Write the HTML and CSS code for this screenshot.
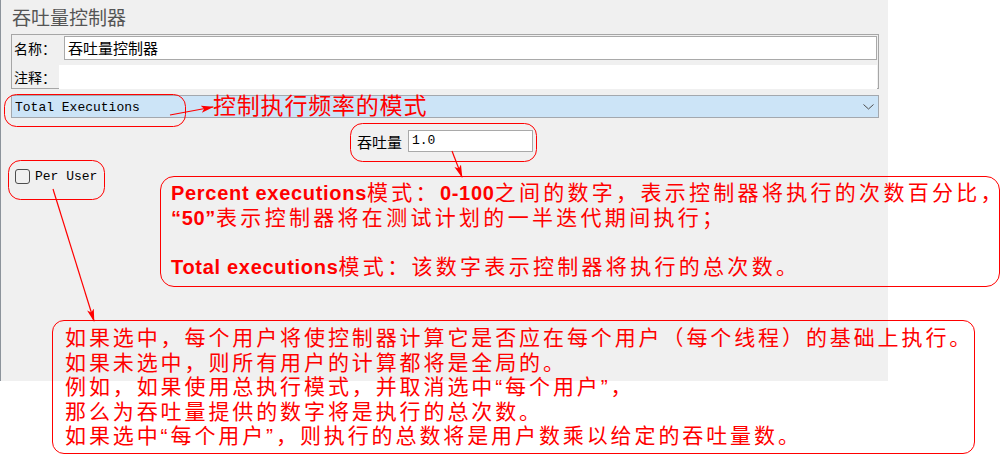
FILE: index.html
```html
<!DOCTYPE html>
<html>
<head>
	<meta charset="utf-8" />
	<title>吞吐量控制器</title>
	<link rel="stylesheet" href="styles.css">
</head>
<body>
	<div class="panel">
		<div class="title">吞吐量控制器</div>
		<div class="group">
			<div class="row name-row">
				<span class="label">名称：</span>
				<div class="field">吞吐量控制器</div>
			</div>
			<div class="row note-row">
				<span class="label">注释：</span>
				<div class="field plain"></div>
			</div>
		</div>
		<div class="combo">
			<span>Total Executions</span>
			<svg class="chevron" width="11" height="6" viewBox="0 0 11 6">
				<polyline points="0.5,0.5 5.5,5 10.5,0.5" fill="none" stroke="#4d4d4d" stroke-width="1"/>
			</svg>
		</div>
		<div class="tp-row">
			<span class="label">吞吐量</span>
			<div class="tp-field">1.0</div>
		</div>
		<div class="check-row">
			<span class="checkbox"></span>
			<span class="check-text">Per User</span>
		</div>
	</div>

	<!-- annotations -->
	<svg class="marks" width="1004" height="461">
		<defs>
			<marker id="head" markerWidth="13" markerHeight="8" refX="12" refY="4" orient="auto" markerUnits="userSpaceOnUse">
				<path d="M0,0.5 L13,4 L0,7.5 L3,4 z" fill="#ff0000"/>
			</marker>
		</defs>
		<rect x="4.5" y="94.5" width="181" height="32" rx="12" fill="none" stroke="#ff0000"/>
		<rect x="350.5" y="123.5" width="186" height="38" rx="12" fill="none" stroke="#ff0000"/>
		<rect x="8.5" y="160.5" width="96" height="39" rx="12" fill="none" stroke="#ff0000"/>
		<line x1="170" y1="115" x2="213" y2="107" stroke="#ff0000" stroke-width="1.2" marker-end="url(#head)"/>
		<line x1="452" y1="151" x2="462" y2="177" stroke="#ff0000" stroke-width="1.2" marker-end="url(#head)"/>
		<line x1="53" y1="189" x2="94" y2="321" stroke="#ff0000" stroke-width="1.2" marker-end="url(#head)"/>
	</svg>

	<div class="note-title">控制执行频率的模式</div>

	<div class="callout mode-note">
		<div><b>Percent executions</b>模式：<b>0-100</b>之间的数字，表示控制器将执行的次数百分比，</div>
		<div><b>“50”</b>表示控制器将在测试计划的一半迭代期间执行；</div>
		<div>&nbsp;</div>
		<div><b>Total executions</b>模式：该数字表示控制器将执行的总次数。</div>
	</div>

	<div class="callout user-note">
		<div>如果选中，每个用户将使控制器计算它是否应在每个用户（每个线程）的基础上执行。</div>
		<div>如果未选中，则所有用户的计算都将是全局的。</div>
		<div>例如，如果使用总执行模式，并取消选中“每个用户”，</div>
		<div>那么为吞吐量提供的数字将是执行的总次数。</div>
		<div>如果选中“每个用户”，则执行的总数将是用户数乘以给定的吞吐量数。</div>
	</div>
</body>
</html>
```

FILE: styles.css
```css
body{
	margin: 0;
	background-color: #ffffff;
	font-family: "Noto Sans CJK SC", sans-serif;
	position: relative;
	width: 1004px;
	height: 461px;
	overflow: hidden;
}

.panel{
	box-sizing: border-box;
	width: 888px;
	height: 381px;
	padding: 5px 9px 0 10px;
	background-color: #f0f0f0;
	border-left: 1px solid #8c939b;
	color: #000;
}
.title{
	font-size: 19px;
	line-height: 24px;
	color: #555555;
	padding-left: 1px;
}

.group{
	margin-top: 5px;
	border: 1px solid #a6a6a6;
	padding: 1px 1px 0 2px;
	height: 55px;
	box-sizing: border-box;
}
.row{
	display: flex;
	align-items: center;
}
.label{
	font-size: 14px;
	white-space: nowrap;
}
.name-row{
	height: 24px;
}
.name-row .label{
	width: 50px;
}
.note-row{
	margin-top: 5px;
	height: 24px;
}
.note-row .label{
	width: 45px;
}
.field{
	flex: 1;
	height: 24px;
	box-sizing: border-box;
	border: 1px solid #a9a9a9;
	background-color: #ffffff;
	font-size: 15px;
	line-height: 22px;
	padding-left: 3px;
}
.field.plain{
	border: none;
}

.combo{
	margin-top: 6px;
	height: 23px;
	box-sizing: border-box;
	border: 1px solid #a3a8ae;
	background-color: #cce4f7;
	display: flex;
	align-items: center;
	justify-content: space-between;
	padding: 1px 4px 0 3px;
	font-family: "Liberation Mono", monospace;
	font-size: 13px;
}
.chevron{
	display: block;
}

.tp-row{
	margin-top: 12px;
	display: flex;
	justify-content: center;
	align-items: center;
	gap: 6px;
}
.tp-row .label{
	font-size: 15px;
}
.tp-field{
	width: 125px;
	height: 22px;
	box-sizing: border-box;
	border: 1px solid #a9a9a9;
	background-color: #ffffff;
	font-family: "Liberation Mono", monospace;
	font-size: 13px;
	line-height: 20px;
	padding-left: 3px;
}

.check-row{
	margin-top: 17px;
	padding-left: 4px;
	display: flex;
	align-items: center;
	gap: 5px;
}
.checkbox{
	width: 15px;
	height: 15px;
	box-sizing: border-box;
	border: 1px solid #4d4d4d;
	border-radius: 3px;
}
.check-text{
	font-family: "Liberation Mono", monospace;
	font-size: 13px;
}

/* red notes drawn on top of the screenshot */
.marks{
	position: absolute;
	left: 0;
	top: 0;
	pointer-events: none;
}
.note-title{
	position: absolute;
	left: 213px;
	top: 90px;
	font-size: 23px;
	line-height: 28px;
	letter-spacing: 0.8px;
	color: #ff0000;
	white-space: nowrap;
}
.callout{
	position: absolute;
	box-sizing: border-box;
	border: 1px solid #ff0000;
	color: #ff0000;
	font-family: "Liberation Sans", "Noto Sans CJK SC", sans-serif;
	font-size: 21px;
	line-height: 24.5px;
	white-space: nowrap;
}
.callout b{
	font-size: 20px;
	letter-spacing: 0.7px;
}
.mode-note{
	left: 160px;
	top: 176px;
	width: 840px;
	height: 111px;
	border-radius: 14px;
	padding: 4px 0 0 10px;
	letter-spacing: 3.3px;
}
.user-note{
	left: 52px;
	top: 320px;
	width: 923px;
	height: 134px;
	border-radius: 12px;
	padding: 5px 0 0 12px;
	letter-spacing: 2.9px;
}
```
